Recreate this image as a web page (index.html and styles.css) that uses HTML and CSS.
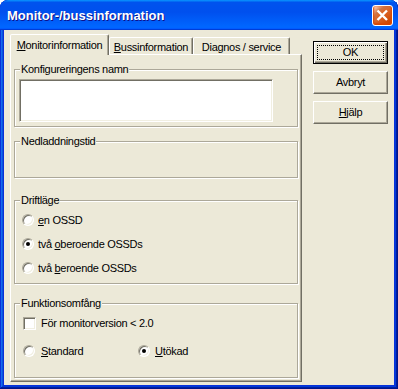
FILE: index.html
```html
<!DOCTYPE html>
<html lang="sv">
<head>
<meta charset="utf-8">
<title>Monitor-/bussinformation</title>
<link rel="stylesheet" href="styles.css">
</head>
<body>
<div class="window">
  <div class="titlebar">
    <span class="title">Monitor-/bussinformation</span>
    <span class="close"><svg viewBox="0 0 19 19" width="19" height="19"><path d="M4.5 4.5L14 14M14 4.5L4.5 14" stroke="#fff" stroke-width="2.4" fill="none"/></svg></span>
  </div>
  <div class="client">
    <div class="tabcol">
      <div class="tabs">
        <div class="tab active"><u>M</u>onitorinformation</div>
        <div class="tab t2"><u>B</u>ussinformation</div>
        <div class="tab t3">Diagnos / service</div>
      </div>
      <div class="pane">
        <fieldset class="grp g1">
          <legend>Konfigureringens namn</legend>
          <div class="field"></div>
        </fieldset>
        <fieldset class="grp g2">
          <legend>Nedladdningstid</legend>
        </fieldset>
        <fieldset class="grp g3">
          <legend>Driftläge</legend>
          <div class="inner">
            <div class="row"><span class="radio"></span><span><u>e</u>n OSSD</span></div>
            <div class="row"><span class="radio on"></span><span>två <u>o</u>beroende OSSDs</span></div>
            <div class="row"><span class="radio"></span><span>två <u>b</u>eroende OSSDs</span></div>
          </div>
        </fieldset>
        <fieldset class="grp g4">
          <legend>Funktionsomfång</legend>
          <div class="inner">
            <div class="row"><span class="check"></span><span>För monitorversion &lt; 2.0</span></div>
            <div class="row r2">
              <div class="opt"><span class="radio"></span><span><u>S</u>tandard</span></div>
              <div class="opt"><span class="radio on"></span><span><u>U</u>tökad</span></div>
            </div>
          </div>
        </fieldset>
      </div>
    </div>
    <div class="buttons">
      <div class="btn default"><span class="focus">OK</span></div>
      <div class="btn">Avbryt</div>
      <div class="btn"><span><u>H</u>jälp</span></div>
    </div>
  </div>
</div>
</body>
</html>
```
FILE: styles.css
```css
* { box-sizing: border-box; }
html, body { margin: 0; padding: 0; background: #fff; }
body {
  font-family: "Liberation Sans", Arial, sans-serif;
  font-size: 11px;
  letter-spacing: -0.3px;
  color: #000;
}
u { text-decoration: underline; text-underline-offset: 1px; }

.window {
  width: 398px;
  height: 389px;
  display: flex;
  flex-direction: column;
  background: #0831d9;
  border-radius: 8px 8px 0 0;
  overflow: hidden;
  box-shadow: inset -1px -1px #00138c, inset 1px 1px #0831d9, inset -2px -2px #001ea0,
    inset 2px 2px #166aee, inset -3px -3px #003bda, inset 3px 3px #0855dd;
}

.titlebar {
  height: 30px;
  flex: none;
  display: flex;
  align-items: flex-start;
  justify-content: space-between;
  padding: 0 5px 0 7px;
  border-radius: 8px 8px 0 0;
  background: linear-gradient(180deg, #0997ff, #0053ee 8%, #0050ee 40%, #06f 88%, #06f 93%, #005bff 95%, #003dd7 96%, #003dd7);
}
.title {
  font-weight: bold;
  font-size: 13px;
  letter-spacing: 0;
  line-height: 28px;
  padding-top: 2px;
  color: #fff;
  text-shadow: 1px 1px #0f1089;
  white-space: nowrap;
}
.close {
  margin-top: 5px;
  width: 21px;
  height: 21px;
  border: 1px solid #fff;
  border-radius: 3px;
  display: flex;
  background: radial-gradient(circle at 90% 90%, #cc4600 0%, #dc6527 55%, #cd7546 70%, #ffccb2 90%, #fff 100%);
  box-shadow: inset 0 -1px 2px 1px #da4600;
}

.client {
  flex: 1;
  margin: 0 4px 4px;
  background: #ece9d8;
  display: flex;
  gap: 11px;
  padding: 4px 0 3px 6px;
}

.tabcol {
  width: 292px;
  display: flex;
  flex-direction: column;
}
.tabs {
  height: 20px;
  display: flex;
  align-items: flex-end;
}
.tab {
  height: 17px;
  border: 1px solid;
  border-bottom: 0;
  border-color: #fff #716f64 transparent #fff;
  box-shadow: inset -1px 0 #aca899;
  border-radius: 2px 2px 0 0;
  text-align: center;
  line-height: 13px;
  padding-top: 2.5px;
  white-space: nowrap;
  background: #ece9d8;
}
.tab.active {
  width: 99px;
  height: 21px;
  margin-bottom: -1px;
  padding-top: 3.5px;
  position: relative;
  z-index: 1;
}
.tab.t2 { width: 84px; }
.tab.t3 { width: 97px; }

.pane {
  height: 328px;
  border: 1px solid;
  border-color: #fff #716f64 #716f64 #fff;
  box-shadow: inset -1px -1px #aca899;
  display: flex;
  flex-direction: column;
  padding-left: 1px;
}

.grp {
  margin: 0 0 0 2px;
  padding: 0;
  width: 284px;
  min-width: 0;
  border: 1px solid #aca899;
  box-shadow: inset 1px 1px #fff, 1px 1px #fff;
}
.grp legend {
  margin-left: 5px;
  padding: 0 1px;
  line-height: 13px;
  background: #ece9d8;
  white-space: nowrap;
}
.g1 { margin-top: 8px; height: 64px; }
.g2 { margin-top: 8px; height: 43px; }
.g3 { margin-top: 16px; height: 90px; }
.g4 { margin-top: 13px; height: 81px; }

.field {
  width: 254px;
  height: 43px;
  margin: 3px 0 0 4px;
  background: #fff;
  border: 1px solid;
  border-color: #aca899 #fff #fff #aca899;
  box-shadow: inset 1px 1px #716f64, inset -1px -1px #f1efe2;
}

.inner { padding-top: 1px; }
.g3 .inner { padding-left: 7px; }
.g4 .inner { padding-left: 8px; }

.row {
  height: 24px;
  display: flex;
  align-items: center;
  white-space: nowrap;
  line-height: 13px;
}
.row.r2 { margin-top: 4px; }
.opt {
  display: flex;
  align-items: center;
}
.opt:first-child { width: 115px; }

.radio, .check {
  flex: none;
  width: 12px;
  height: 12px;
  background: #fff;
  border: 1px solid;
  border-color: #aca899 #fff #fff #aca899;
  box-shadow: inset 1px 1px #716f64, inset -1px -1px #f1efe2;
  display: flex;
  align-items: center;
  justify-content: center;
  margin-right: 4px;
}
.radio { border-radius: 50%; }
.radio.on::after {
  content: "";
  width: 4px;
  height: 4px;
  border-radius: 50%;
  background: #000;
}
.g4 .radio { margin-right: 6px; }
.g4 .opt + .opt .radio { margin-right: 5px; }
.check { width: 13px; height: 13px; margin-right: 5px; }

.buttons {
  display: flex;
  flex-direction: column;
  gap: 7px;
  padding-top: 7px;
}
.btn {
  width: 75px;
  height: 23px;
  display: flex;
  align-items: center;
  justify-content: center;
  line-height: 13px;
  background: #ece9d8;
  border: 1px solid;
  border-color: #fff #716f64 #716f64 #fff;
  box-shadow: inset -1px -1px #aca899;
}
.btn.default {
  border-color: #000;
  box-shadow: inset 1px 1px #fff, inset -1px -1px #716f64, inset -2px -2px #aca899;
  padding: 3px;
}
.focus {
  flex: 1;
  align-self: stretch;
  border: 1px dotted #000;
  display: flex;
  align-items: center;
  justify-content: center;
}
```
